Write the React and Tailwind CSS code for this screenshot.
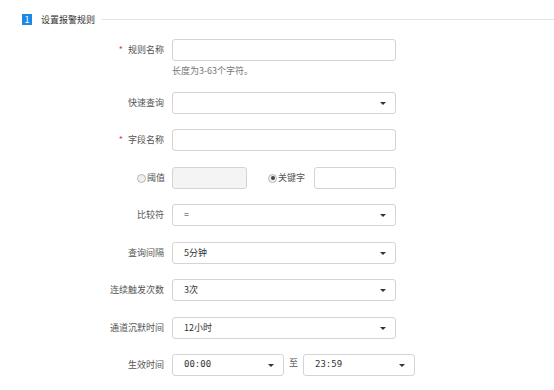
const font = { fontFamily: '"Noto Sans CJK SC", "Noto Sans", sans-serif' };
const mono = { fontFamily: '"DejaVu Sans Mono", "Liberation Mono", monospace' };

function Caret() {
  return <span className="w-0 h-0 border-l-[3px] border-r-[3px] border-t-[3px] border-l-transparent border-r-transparent border-t-[#333]" />;
}

function Label({ children, required }) {
  return (
    <div className="w-[165px] shrink-0 text-right text-[9px] text-[#555] pr-[1px]">
      {required && <span className="text-[#e53935] mr-[5px]">*</span>}
      {children}
    </div>
  );
}

function Box({ className = "", bg = "bg-white", children }) {
  return (
    <div className={"h-[22px] border border-[#d4d4d4] rounded-[3px] flex items-center " + bg + " " + className}>
      {children}
    </div>
  );
}

function Select({ value, className = "w-[224px]", time }) {
  return (
    <Box className={className + " pl-[11px] pr-[9px] justify-between"}>
      <span className="text-[9px] text-[#333]" style={time ? mono : undefined}>{value}</span>
      <Caret />
    </Box>
  );
}

function Row({ label, required, children, className = "mt-[15px]" }) {
  return (
    <div className={"flex items-center " + className}>
      <Label required={required}>{label}</Label>
      <div className="ml-[7px] flex items-center">{children}</div>
    </div>
  );
}

function Radio({ checked }) {
  return (
    <span className="w-[9px] h-[9px] rounded-full border border-[#b5b5b5] bg-[#f0f0f0] flex items-center justify-center mr-[1px]">
      {checked && <span className="w-[4px] h-[4px] rounded-full bg-[#444]" />}
    </span>
  );
}

export default function App() {
  return (
    <div className="w-[554px] h-[390px] bg-white overflow-hidden" style={font}>
      <div className="flex items-center pt-[14px] pl-[22px]">
        <div className="w-[10px] h-[11px] bg-[#1e88e5] text-white text-[9px] leading-[11px] text-center">1</div>
        <span className="ml-[9px] text-[9px] leading-[11px] text-[#333]">设置报警规则</span>
        <div className="flex-1 h-px bg-[#e3e3e3] ml-[7px]" />
      </div>

      <Row label="规则名称" required className="mt-[14px]">
        <Box className="w-[224px]" />
      </Row>
      <div className="ml-[172px] mt-[4px] text-[9px] leading-[12px] text-[#777]">长度为3-63个字符。</div>

      <Row label="快速查询" className="mt-[15px]">
        <Select value="" />
      </Row>

      <Row label="字段名称" required className="mt-[15px]">
        <Box className="w-[224px]" />
      </Row>

      <div className="flex items-center mt-[16px]">
        <div className="w-[165px] shrink-0 flex items-center justify-end text-[9px] text-[#555]">
          <Radio />
          <span>阈值</span>
        </div>
        <div className="ml-[7px] flex items-center">
          <Box className="w-[75px]" bg="bg-[#f4f4f4]" />
          <div className="ml-[21px] flex items-center text-[9px] text-[#555]">
            <Radio checked />
            <span>关键字</span>
          </div>
          <Box className="ml-[9px] w-[82px]" />
        </div>
      </div>

      <Row label="比较符" className="mt-[15px]">
        <Select value="=" />
      </Row>
      <Row label="查询间隔" className="mt-[16px]">
        <Select value="5分钟" />
      </Row>
      <Row label="连续触发次数" className="mt-[15px]">
        <Select value="3次" />
      </Row>
      <Row label="通道沉默时间" className="mt-[16px]">
        <Select value="12小时" />
      </Row>
      <Row label="生效时间" className="mt-[15px]">
        <Select value="00:00" className="w-[112px]" time />
        <span className="mx-[5px] text-[9px] text-[#555] -mt-[5px]">至</span>
        <Select value="23:59" className="w-[112px]" time />
      </Row>
    </div>
  );
}
